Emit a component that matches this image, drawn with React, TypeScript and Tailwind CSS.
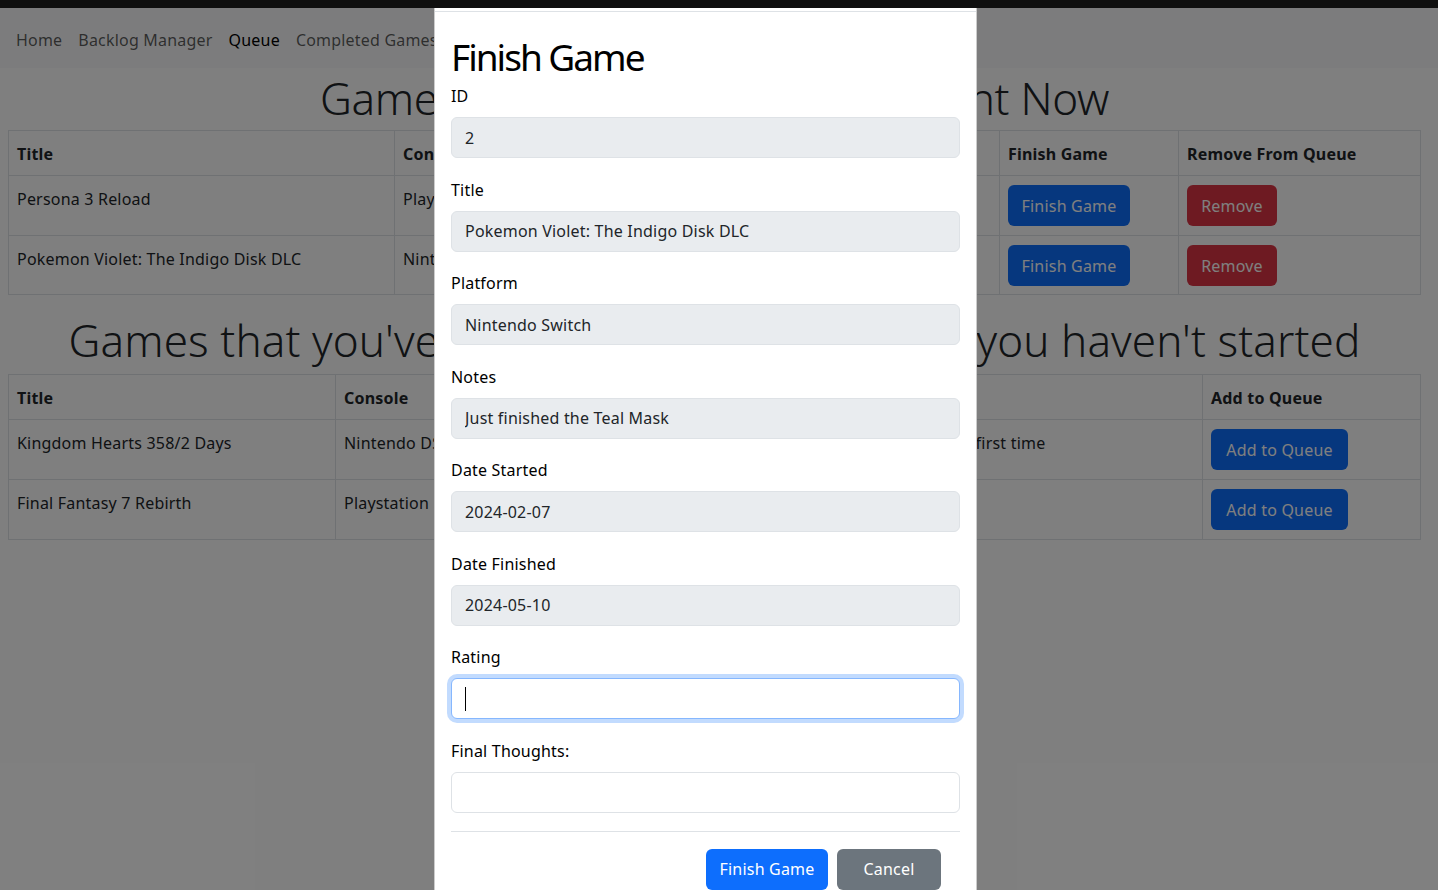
import React from 'react'

type QueueRow = { title: string; console: string; notes: string; started: string }
type BacklogRow = { title: string; console: string; notes: string }

const queue: QueueRow[] = [
    { title: 'Persona 3 Reload', console: 'Playstation 5', notes: 'Second playthrough', started: '2024-02-02' },
    { title: 'Pokemon Violet: The Indigo Disk DLC', console: 'Nintendo Switch', notes: 'Just finished the Teal Mask', started: '2024-02-07' },
]

const backlog: BacklogRow[] = [
    { title: 'Kingdom Hearts 358/2 Days', console: 'Nintendo DS', notes: 'Playing it for the first time' },
    { title: 'Final Fantasy 7 Rebirth', console: 'Playstation 5', notes: 'Day one buy' },
]

const fields = [
    { label: 'ID', value: '2' },
    { label: 'Title', value: 'Pokemon Violet: The Indigo Disk DLC' },
    { label: 'Platform', value: 'Nintendo Switch' },
    { label: 'Notes', value: 'Just finished the Teal Mask' },
    { label: 'Date Started', value: '2024-02-07' },
    { label: 'Date Finished', value: '2024-05-10' },
]

function Btn({ color, width, children }: { color: 'blue' | 'red' | 'gray'; width: string; children: React.ReactNode }) {
    const bg = color === 'blue' ? 'bg-[#0d6efd]' : color === 'red' ? 'bg-[#dc3545]' : 'bg-[#6c757d]'
    return (
        <button className={`${bg} ${width} h-[41px] rounded-md text-white text-base leading-6 text-center`}>
            {children}
        </button>
    )
}

export default function App() {
    return (
        <div className="relative h-[890px] overflow-hidden bg-white text-[#212529] tracking-[0.2px] font-['Noto_Sans',sans-serif]">
            {/* top strip */}
            <div className="h-2 bg-[#0f0f0f] relative z-30"></div>

            {/* Navbar */}
            <nav className="h-[60px] bg-[#f8f9fa] flex items-center pl-2 pt-[3px]">
                <a className="px-2 text-black/65">Home</a>
                <a className="px-2 text-black/65">Backlog Manager</a>
                <a className="px-2 text-black">Queue</a>
                <a className="px-2 text-black/65">Completed Games</a>
            </nav>

            <main className="pl-2 pr-[17px]">
                <h1 className="h-[62px] leading-[60px] text-center text-[44px] font-light tracking-[-0.3px]">
                    Games you're actively playing Right Now
                </h1>

                {/* Queue table */}
                <table className="w-full table-fixed border-collapse border border-[#dee2e6]">
                    <colgroup>
                        <col className="w-[386px]" />
                        <col className="w-[170px]" />
                        <col className="w-[270px]" />
                        <col className="w-[165px]" />
                        <col className="w-[179px]" />
                        <col />
                    </colgroup>
                    <thead>
                        <tr className="h-[45px] border-b border-[#dee2e6]">
                            <th className="px-2 pt-[2px] text-left font-bold border-r border-[#dee2e6]">Title</th>
                            <th className="px-2 pt-[2px] text-left font-bold border-r border-[#dee2e6]">Console</th>
                            <th className="px-2 pt-[2px] text-left font-bold border-r border-[#dee2e6]">Notes</th>
                            <th className="px-2 pt-[2px] text-left font-bold border-r border-[#dee2e6]">Date Started</th>
                            <th className="px-2 pt-[2px] text-left font-bold border-r border-[#dee2e6]">Finish Game</th>
                            <th className="px-2 pt-[2px] text-left font-bold">Remove From Queue</th>
                        </tr>
                    </thead>
                    <tbody>
                        {queue.map((row, i) => (
                            <tr key={i} className={`${i === 0 ? 'h-[60px]' : 'h-[59px]'} border-b border-[#dee2e6] align-top`}>
                                <td className="p-2 pt-[11px] border-r border-[#dee2e6]">{row.title}</td>
                                <td className="p-2 pt-[11px] border-r border-[#dee2e6]">{row.console}</td>
                                <td className="p-2 pt-[11px] border-r border-[#dee2e6]">{row.notes}</td>
                                <td className="p-2 pt-[11px] border-r border-[#dee2e6]">{row.started}</td>
                                <td className="p-2 pt-[9px] border-r border-[#dee2e6]">
                                    <Btn color="blue" width="w-[122px]">Finish Game</Btn>
                                </td>
                                <td className="p-2 pt-[9px]">
                                    <Btn color="red" width="w-[90px]">Remove</Btn>
                                </td>
                            </tr>
                        ))}
                    </tbody>
                </table>

                <h1 className="mt-4 h-[63px] leading-[58px] text-center text-[44px] font-light tracking-[0.1px]">
                    Games that you've added to the backlog, but you haven't started
                </h1>

                {/* Backlog table */}
                <table className="w-full table-fixed border-collapse border border-[#dee2e6]">
                    <colgroup>
                        <col className="w-[327px]" />
                        <col className="w-[500px]" />
                        <col className="w-[367px]" />
                        <col />
                    </colgroup>
                    <thead>
                        <tr className="h-[45px] border-b border-[#dee2e6]">
                            <th className="px-2 pt-[2px] text-left font-bold border-r border-[#dee2e6]">Title</th>
                            <th className="px-2 pt-[2px] text-left font-bold border-r border-[#dee2e6]">Console</th>
                            <th className="px-2 pt-[2px] text-left font-bold border-r border-[#dee2e6]">Notes</th>
                            <th className="px-2 pt-[2px] text-left font-bold">Add to Queue</th>
                        </tr>
                    </thead>
                    <tbody>
                        {backlog.map((row, i) => (
                            <tr key={i} className="h-[60px] border-b border-[#dee2e6] align-top">
                                <td className="p-2 pt-[11px] border-r border-[#dee2e6]">{row.title}</td>
                                <td className="p-2 pt-[11px] border-r border-[#dee2e6]">{row.console}</td>
                                <td className="p-2 pt-[11px] border-r border-[#dee2e6]">{row.notes}</td>
                                <td className="p-2 pt-[9px]">
                                    <Btn color="blue" width="w-[137px]">Add to Queue</Btn>
                                </td>
                            </tr>
                        ))}
                    </tbody>
                </table>
            </main>

            {/* Backdrop */}
            <div className="absolute inset-0 top-2 bg-black/50 z-10"></div>

            {/* Modal */}
            <div className="absolute left-[434px] top-2 w-[543px] h-[900px] bg-white border-x border-black/20 z-20">
                <div className="h-[4px] border-b border-[#dee2e6]"></div>
                <div className="px-4 pt-[21px]">
                    <h1 className="text-[37px] leading-[48px] font-normal tracking-[-2px] text-black mb-[3px]">Finish Game</h1>
                    {fields.map((f) => (
                        <div key={f.label} className="mb-[19.5px]">
                            <label className="block leading-6 mb-[9px] text-black">{f.label}</label>
                            <input
                                readOnly
                                value={f.value}
                                className="w-full h-[41px] px-[13px] rounded-md bg-[#e9ecef] border border-[#dee2e6] text-[#212529] text-base tracking-[0.2px] outline-none"
                            />
                        </div>
                    ))}
                    <div className="mb-[19.5px]">
                        <label className="block leading-6 mb-[9px] text-black">Rating</label>
                        <div className="w-full h-[41px] px-[13px] rounded-md bg-white border border-[#86b7fe] shadow-[0_0_0_4px_rgba(13,110,253,0.25)] flex items-center">
                            <span className="w-px h-[24px] bg-black"></span>
                        </div>
                    </div>
                    <div>
                        <label className="block leading-6 mb-[9px] text-black">Final Thoughts:</label>
                        <div className="w-full h-[41px] rounded-md bg-white border border-[#dee2e6]"></div>
                    </div>
                    <div className="mt-[18px] border-t border-[#dee2e6]"></div>
                    <div className="flex justify-end gap-[9px] pr-[19px] pt-[17px]">
                        <Btn color="blue" width="w-[122px]">Finish Game</Btn>
                        <Btn color="gray" width="w-[104px]">Cancel</Btn>
                    </div>
                </div>
            </div>
        </div>
    )
}
